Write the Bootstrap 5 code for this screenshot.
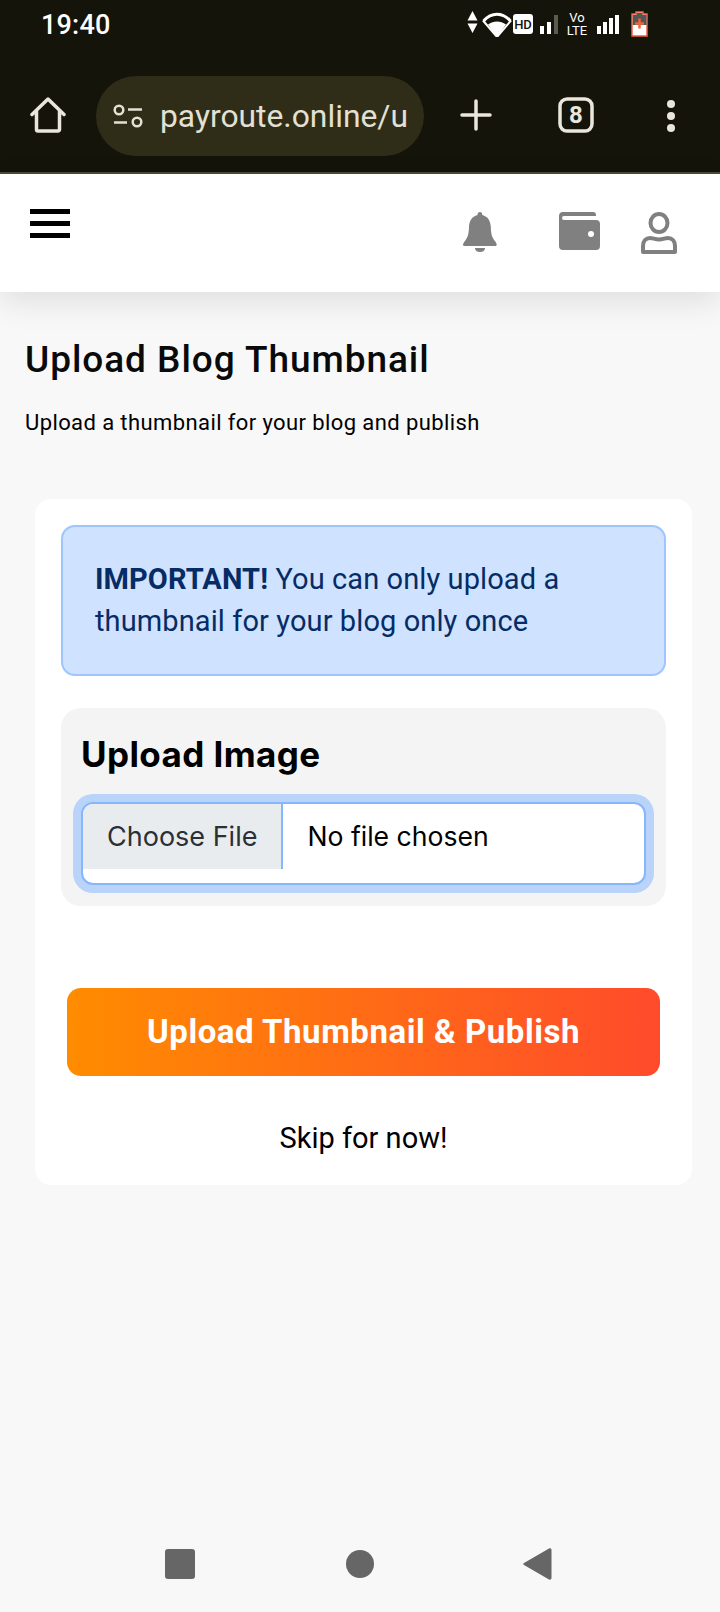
<!DOCTYPE html>
<html lang="en">
<head>
<meta charset="UTF-8">
<meta name="viewport" content="width=device-width, initial-scale=1.0">
<title>Upload Blog Thumbnail</title>
<link href="https://cdn.jsdelivr.net/npm/bootstrap@5.3.0/dist/css/bootstrap.min.css" rel="stylesheet">
<style>
body { background: #f8f8f8; font-family: Roboto, sans-serif; color: #000; }
.phone-page { height: 1612px; overflow: hidden; }
/* browser chrome */
.chrome-top { background: #14140a; height: 174px; border-bottom: 2px solid #4a4a38; flex: none; }
.status-row { height: 50px; padding-left: 41px; padding-right: 72px; color: #fff; }
.status-time { font-size: 27px; font-weight: 500; line-height: 51px; letter-spacing: .2px; }
.status-icons { margin-top: 11px; height: 28px; }
.volte-text { font-size: 13px; line-height: 13px; text-align: center; color: #fff; width: 22px; margin: 0 9px 0 5px; }
.url-row { height: 122px; padding-top: 26px; padding-left: 30px; }
.url-pill { width: 328px; height: 80px; margin-left: 30px; padding-left: 17px; padding-top: 2px; background: #2f2c18; border-radius: 40px; color: #e3e0d4; font-size: 31.8px; overflow: hidden; white-space: nowrap; }
.url-pill svg { margin-right: 17px; flex: none; margin-top: -2px; }
.btn-plus { margin-left: 36px; }
.btn-tabs { margin-left: 66px; }
.btn-dots { margin-left: 69px; }
/* site header */
.site-head { height: 118px; background: #fff; box-shadow: 0 10px 30px rgba(0,0,0,.1); padding: 35px 43px 0 30px; flex: none; position: relative; }
.burger-bar { display: block; width: 40px; height: 5px; background: #000; margin-bottom: 7px; }
.head-icons { margin-top: 3px; }
.head-icons svg:nth-child(2) { margin-left: 61px; }
.head-icons svg:nth-child(3) { margin-left: 41px; }
/* page body */
.page-title { font-size: 37px; font-weight: 500; margin: 46px 0 0 25px; line-height: 44px; letter-spacing: .95px; color: #0a0a0a; }
.page-sub { font-size: 22px; margin: 26px 0 0 25px; line-height: 30px; letter-spacing: .4px; }
.upload-card { width: 657px; height: 686px; margin: 61px 0 0 35px; padding: 26px; background: #fff; border-radius: 16px; }
.notice-box { height: 151px; padding: 31px 32px; background: #cfe2ff; border: 2px solid #9ec5fe; border-radius: 14px; color: #052c65; font-size: 29px; line-height: 42px; letter-spacing: .1px; margin: 0; }
.notice-box strong { font-weight: 700; }
.image-box { height: 198px; margin-top: 32px; padding: 24px 20px; background: #f4f4f4; border-radius: 20px; }
.image-title { font-family: Inter, sans-serif; font-size: 35px; font-weight: 700; line-height: 44px; margin: 0 0 26px; letter-spacing: .4px; }
.image-box .form-control { height: 83px; padding: 0 25px; font-family: Inter, sans-serif; font-size: 26.6px; line-height: 65px; border: 2px solid #86b7fe; border-radius: 12px; box-shadow: 0 0 0 8px #b9d3f9; color: #000; }
.image-box .form-control::file-selector-button { height: 65px; padding: 0 24px 0 24px; margin: 0 24px 0 -25px; font-size: 27px; background: #e9ecef; color: #2b3035; border: 0; border-right: 2px solid #86b7fe; border-radius: 0; }
.publish-btn { display: block; width: 593px; height: 88px; margin: 82px 0 0 6px; border: 0; border-radius: 14px; background: linear-gradient(90deg, #ff8c00, #ff4b2b); color: #fff; font-size: 33px; font-weight: 700; letter-spacing: .55px; }
.skip-link { display: block; margin-top: 44px; text-align: center; color: #000; text-decoration: none; font-size: 29px; line-height: 36px; margin-left: 6px; width: 593px; }
/* android nav */
.android-nav { margin-top: auto; height: 105px; padding-top: 38px; }
</style>
</head>
<body>
<div class="phone-page d-flex flex-column">

  <div class="chrome-top">
    <div class="status-row d-flex justify-content-between">
      <span class="status-time">19:40</span>
      <div class="status-icons d-flex align-items-start">
        <svg width="11" height="22" viewBox="0 0 11 22" fill="#fff"><path d="M5.500 0 10.500 9.500H.5zM5.500 22 .5 12.500h10z"/></svg>
        <svg style="margin-left:3px" width="32" height="26" viewBox="0 0 32 26" fill="#fff"><path d="M16 26 7 13.500C12.500 9.500 19.500 9.500 25 13.500z"/><path d="M2.500 10C10.500 1 21.500 1 29.500 10" fill="none" stroke="#fff" stroke-width="3"/><path d="M2 9.500 16 26 30 9.500" fill="none" stroke="#fff" stroke-width="2"/></svg>
        <svg width="21" height="21" viewBox="0 0 21 21" style="margin-top:3px"><rect width="20" height="20" rx="3" fill="#fff"/><text x="10" y="15" text-anchor="middle" font-family="Roboto, sans-serif" font-size="13" font-weight="500" fill="#14140a">HD</text></svg>
        <svg class="ms-1" width="23" height="21" viewBox="0 0 23 21" style="margin-top:3px"><rect x="2" y="12" width="4" height="8" fill="#fff"/><rect x="9" y="8" width="4" height="12" fill="#fff"/><rect x="16" y="1" width="4" height="19" fill="#5b5b52"/></svg>
        <div class="volte-text">Vo<br>LTE</div>
        <svg width="23" height="21" viewBox="0 0 23 21" style="margin-top:3px"><rect x="0" y="12" width="4" height="8" fill="#fff"/><rect x="6" y="8" width="4" height="12" fill="#fff"/><rect x="12" y="4" width="4" height="16" fill="#fff"/><rect x="18" y="1" width="4" height="19" fill="#fff"/></svg>
        <svg width="17" height="26" viewBox="0 0 17 26" style="margin-left:11px"><path d="M5 1h7v2h4v22H1V3h4z" fill="#fff" stroke="#f0633a" stroke-width="1.500"/><path d="M5.500 2h6v2h4v10H1.800V4h3.700z" fill="#555"/><path d="M8.500 7.500v10M4 12.500h9" stroke="#f0633a" stroke-width="2.500"/></svg>
      </div>
    </div>
    <div class="url-row d-flex">
      <svg style="margin-top:20px" width="36" height="38" viewBox="0 0 36 38" fill="none" stroke="#e9e6dc" stroke-width="3.500" stroke-linejoin="round" stroke-linecap="round"><path d="M2 18.500 18 3l16 15.500M6.500 15v18.500a1.500 1.500 0 0 0 1.500 1.500h20a1.500 1.500 0 0 0 1.500-1.500V15"/></svg>
      <div class="url-pill d-flex align-items-center">
        <svg width="30" height="24" viewBox="0 0 30 24" fill="none" stroke="#e3e0d4" stroke-width="2.500"><circle cx="6" cy="6" r="4.300"/><path d="M15 5.500h14M1 18.500h13"/><circle cx="24" cy="18" r="4.300"/></svg>
        <span>payroute.online/u</span>
      </div>
      <svg class="btn-plus" style="margin-top:23px" width="32" height="32" viewBox="0 0 32 32" stroke="#e9e6dc" stroke-width="3.500" stroke-linecap="round"><path d="M16 2v28M2 16h28"/></svg>
      <svg class="btn-tabs" style="margin-top:21px" width="36" height="36" viewBox="0 0 36 36"><rect x="2" y="2" width="32" height="32" rx="7" fill="none" stroke="#e9e6dc" stroke-width="3.500"/><text x="18" y="26" text-anchor="middle" font-family="Roboto, sans-serif" font-size="24" font-weight="700" fill="#e9e6dc">8</text></svg>
      <svg class="btn-dots" style="margin-top:24px" width="16" height="34" viewBox="0 0 16 34" fill="#e9e6dc"><circle cx="8" cy="4" r="4"/><circle cx="8" cy="16" r="4"/><circle cx="8" cy="28" r="4"/></svg>
    </div>
  </div>

  <header class="site-head d-flex justify-content-between align-items-start">
    <div>
      <span class="burger-bar"></span><span class="burger-bar"></span><span class="burger-bar"></span>
    </div>
    <div class="head-icons d-flex align-items-start">
      <svg width="36" height="40" viewBox="0 0 36 40" fill="#808080"><path d="M18 0c1.500 0 2.300 1 2.300 3 5.700 1.500 8.200 6 8.500 12 .3 7 1 10 4 14 2 2.200 2.700 4.500 1 5H2c-1.700-.5-1-2.800 1-5 3-4 3.700-7 4-14 .3-6 2.800-10.500 8.500-12 0-2 .8-3 2.500-3z"/><path d="M13 36h10c0 2.500-2 4-5 4s-5-1.500-5-4z"/></svg>
      <svg width="41" height="38" viewBox="0 0 41 38" fill="#808080"><path d="M4 0h30a3 3 0 0 1 3 3v1H5a1.500 1.500 0 0 0 0 4h32a4 4 0 0 1 4 4v22a4 4 0 0 1-4 4H4a4 4 0 0 1-4-4V4a4 4 0 0 1 4-4z"/><circle cx="32" cy="22" r="3" fill="#fff"/></svg>
      <svg width="36" height="42" viewBox="0 0 36 42" fill="none" stroke="#808080" stroke-width="4"><ellipse cx="18" cy="11" rx="8.500" ry="9"/><path d="M9 26c3 0 5 1.500 9 1.500s6-1.500 9-1.500c4 0 7 3 7 8v6H2v-6c0-5 3-8 7-8z" stroke-linejoin="round"/></svg>
    </div>
  </header>

  <main>
    <h1 class="page-title">Upload Blog Thumbnail</h1>
    <p class="page-sub">Upload a thumbnail for your blog and publish</p>

    <div class="upload-card">
      <div class="notice-box"><strong>IMPORTANT!</strong> You can only upload a thumbnail for your blog only once</div>
      <div class="image-box">
        <h2 class="image-title">Upload Image</h2>
        <input type="file" class="form-control">
      </div>
      <button type="button" class="publish-btn">Upload Thumbnail &amp; Publish</button>
      <a href="#" class="skip-link">Skip for now!</a>
    </div>
  </main>

  <div class="android-nav d-flex justify-content-center">
    <svg width="400" height="36" viewBox="0 0 400 36" fill="#666"><rect x="5" y="4" width="30" height="30" rx="3"/><circle cx="200" cy="19" r="14"/><path d="M389 3.500c1-.6 2.500 0 2.500 1.500v28c0 1.500-1.500 2.100-2.500 1.500l-25-14.500c-1-.6-1-1.400 0-2z"/></svg>
  </div>
</div>
<script src="https://cdn.jsdelivr.net/npm/bootstrap@5.3.0/dist/js/bootstrap.bundle.min.js"></script>
</body>
</html>
